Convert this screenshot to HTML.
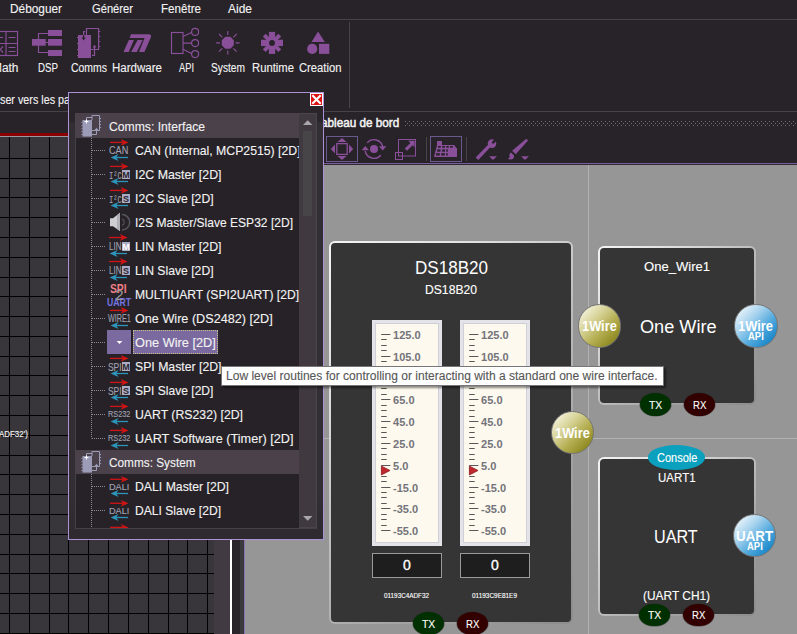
<!DOCTYPE html>
<html><head><meta charset="utf-8"><title>Flowcode</title>
<style>
html,body{margin:0;padding:0;background:#272329;}
#root{position:relative;width:797px;height:634px;overflow:hidden;background:#272329;font-family:"Liberation Sans",sans-serif;}
.b{position:absolute;display:block;}
.t{position:absolute;white-space:pre;font-family:"Liberation Sans",sans-serif;-webkit-text-stroke:0.12px currentColor;}
</style></head><body><div id="root">
<div class="t" style="left:10.00px;top:1.00px;font-size:12px;line-height:16px;color:#f2f2f2;transform:scaleX(0.9864);transform-origin:0 0;">Déboguer</div>
<div class="t" style="left:92.00px;top:1.00px;font-size:12px;line-height:16px;color:#f2f2f2;transform:scaleX(0.9312);transform-origin:0 0;">Générer</div>
<div class="t" style="left:161.00px;top:1.00px;font-size:12px;line-height:16px;color:#f2f2f2;transform:scaleX(0.9671);transform-origin:0 0;">Fenêtre</div>
<div class="t" style="left:228.00px;top:1.00px;font-size:12px;line-height:16px;color:#f2f2f2;transform:scaleX(0.9987);transform-origin:0 0;">Aide</div>
<div class="b" style="left:0px;top:19px;width:797px;height:1px;background:#464446;"></div>
<div class="t" style="left:-8.00px;top:60.00px;font-size:12px;line-height:16px;color:#f2f2f2;transform:scaleX(0.9930);transform-origin:0 0;">Math</div>
<div class="t" style="left:37.50px;top:60.00px;font-size:12px;line-height:16px;color:#f2f2f2;transform:scaleX(0.8101);transform-origin:0 0;">DSP</div>
<div class="t" style="left:71.00px;top:60.00px;font-size:12px;line-height:16px;color:#f2f2f2;transform:scaleX(0.8707);transform-origin:0 0;">Comms</div>
<div class="t" style="left:112.00px;top:60.00px;font-size:12px;line-height:16px;color:#f2f2f2;transform:scaleX(0.9610);transform-origin:0 0;">Hardware</div>
<div class="t" style="left:178.80px;top:60.00px;font-size:12px;line-height:16px;color:#f2f2f2;transform:scaleX(0.7754);transform-origin:0 0;">API</div>
<div class="t" style="left:210.60px;top:60.00px;font-size:12px;line-height:16px;color:#f2f2f2;transform:scaleX(0.8497);transform-origin:0 0;">System</div>
<div class="t" style="left:251.50px;top:60.00px;font-size:12px;line-height:16px;color:#f2f2f2;transform:scaleX(0.9399);transform-origin:0 0;">Runtime</div>
<div class="t" style="left:299.00px;top:60.00px;font-size:12px;line-height:16px;color:#f2f2f2;transform:scaleX(0.9370);transform-origin:0 0;">Creation</div>
<div class="b" style="left:349px;top:22px;width:1px;height:86px;background:#464446;"></div>
<div class="t" style="left:-0.50px;top:92.00px;font-size:12px;line-height:16px;color:#f2f2f2;transform:scaleX(0.8971);transform-origin:0 0;">ser vers les pa</div>
<div class="b" style="left:0px;top:111px;width:797px;height:1px;background:#464446;"></div>
<svg class="b" style="left:0;top:20px" width="360" height="50" viewBox="0 20 360 50">
<g fill="none" stroke="#8a4f99" stroke-width="1.15">
 <!-- math -->
 <rect x="-6.5" y="31.5" width="24" height="24"/><path d="M6 31.5V55.5M-6 43.5H17.5"/>
 <path d="M8.5 37.5H15.5M8.5 47.5H15.5M8.5 51.5H15.5M-3 37.5H3M-2.5 46.5L3 52.5M3 46.5L-2.5 52.5"/>
 <!-- dsp connectors -->
 <path d="M48 33.5H38.5V52.5H48M45 42.5H48"/>
 <!-- api -->
 <rect x="171.5" y="32.5" width="11.5" height="21"/>
 <circle cx="195.1" cy="31.9" r="3.5"/><circle cx="195.1" cy="43.1" r="3.5"/><circle cx="195.1" cy="54.1" r="3.5"/>
 <path d="M183 36.6L192 32.2M183 43.1H191.6M183 49.2L192 53.8"/>
 <!-- system rays -->
 <path d="M216.1 42.8H220M235.6 42.8H239.5M227.8 31V35M227.8 50.6V54.6M218.9 33.9L222.3 37.3M233.3 48.3L236.70000000000002 51.699999999999996M218.9 51.699999999999996L222.3 48.3M233.3 37.3L236.70000000000002 33.9"/>
</g>
<g fill="#8a4f99">
 <!-- dsp blocks -->
 <rect x="48" y="30" width="14" height="6"/><rect x="48" y="39" width="14" height="6.7"/><rect x="48" y="50" width="14" height="6"/><rect x="32" y="39" width="13.7" height="6.7"/>
 <!-- comms -->
 <rect x="78" y="35" width="13" height="23"/>
 <path d="M77 37h1v1h-1zM77 43h1v1h-1zM77 49h1v1h-1zM77 55h1v1h-1zM99 31h1.3v1h-1.3zM99 36h1.3v1h-1.3zM99 41h1.3v1h-1.3zM99 46h1.3v1h-1.3z"/>
 <path d="M92.6 47.6L94.5 44.8L96.4 47.6Z"/>
 <!-- hardware M -->
 <path d="M131 34.2H148.5Q152 34.2 150.8 37.5L144.4 52H139L144.6 38H129.6Z"/>
 <path d="M137.6 40.1H142.7L136.8 52H131.1Z"/><path d="M128.8 40.1H133.9L128.8 52H123.5Z"/>
 <!-- system disc -->
 <polygon points="233.81,45.29 230.29,48.81 225.31,48.81 221.79,45.29 221.79,40.31 225.31,36.79 230.29,36.79 233.81,40.31"/>
 <!-- creation -->
 <path d="M318.1 31.5L324.8 42H311.5Z"/><circle cx="312.2" cy="48.9" r="5.1"/><rect x="319" y="43.8" width="10.3" height="10.1"/>
</g>
<!-- comms outline -->
<g fill="none" stroke="#8a4f99" stroke-width="1.2">
 <path d="M86.5 35V28.5H98.6V49.5H91"/><path d="M85.2 31.6H83.6V35" /><path d="M92 55.4H94.5V46.5"/>
</g>
<path d="M83.6 35V39" stroke="#272329" stroke-width="1.2" fill="none"/><path d="M81.6 37.6L83.6 40.4L85.6 37.6Z" fill="#272329"/>
<!-- runtime gear -->
<g transform="translate(272 42.9)" fill="#8a4f99">
 <circle r="6.2"/>
 <rect x="-3.15" y="-11" width="6.3" height="22"/><rect x="-11" y="-3.15" width="22" height="6.3"/>
 <rect x="-2" y="-11" width="4" height="22" transform="rotate(45)"/><rect x="-2" y="-11" width="4" height="22" transform="rotate(135)"/>
 <circle r="2.9" fill="#272329"/>
</g>
</svg>
<div class="b" style="left:0px;top:133px;width:245px;height:3px;background:#8b0000;"></div>
<div class="b" style="left:0px;top:136px;width:245px;height:1px;background:#9a9a9a;"></div>
<div class="b" style="left:0px;top:137px;width:214px;height:497px;background:#38363b;"></div>
<svg class="b" style="left:0;top:0" width="214" height="634"><path d="M9.5 137V634M29.5 137V634M49.5 137V634M68.5 137V634M88.5 137V634M108.5 137V634M128.5 137V634M148.5 137V634M168.5 137V634M187.5 137V634M207.5 137V634M0 158.5H214M0 178.5H214M0 197.5H214M0 217.5H214M0 237.5H214M0 257.5H214M0 277.5H214M0 296.5H214M0 316.5H214M0 336.5H214M0 356.5H214M0 375.5H214M0 395.5H214M0 415.5H214M0 435.5H214M0 455.5H214M0 474.5H214M0 494.5H214M0 514.5H214M0 534.5H214M0 554.5H214M0 573.5H214M0 593.5H214M0 613.5H214M0 633.5H214" stroke="#000" stroke-width="1" fill="none"/></svg>
<div class="t" style="left:-0.80px;top:428.00px;font-size:8.6px;line-height:12px;color:#f6f6f6;transform:scaleX(0.9216);transform-origin:0 0;">ADF32')</div>
<div class="b" style="left:214px;top:137px;width:16.5px;height:497px;background:#413a42;"></div>
<div class="b" style="left:230.4px;top:137px;width:2.1px;height:497px;background:#ffffff;"></div>
<div class="b" style="left:233px;top:112px;width:7px;height:522px;background:#29252a;"></div>
<div class="b" style="left:240px;top:112px;width:4px;height:522px;background:#3a3a3c;"></div>
<div class="b" style="left:244px;top:112px;width:1px;height:522px;background:#8a6fb5;"></div>
<div class="t" style="left:320.60px;top:115.00px;font-size:12px;line-height:16px;color:#f2f2f2;transform:scaleX(0.9765);transform-origin:0 0;-webkit-text-stroke:0.5px currentColor;">ableau de bord</div>
<svg class="b" style="left:405px;top:121px" width="392" height="5"><path d="M0 0h1v1h-1zM2 2h1v1h-1zM0 4h1v1h-1zM4 0h1v1h-1zM6 2h1v1h-1zM4 4h1v1h-1zM8 0h1v1h-1zM10 2h1v1h-1zM8 4h1v1h-1zM12 0h1v1h-1zM14 2h1v1h-1zM12 4h1v1h-1zM16 0h1v1h-1zM18 2h1v1h-1zM16 4h1v1h-1zM20 0h1v1h-1zM22 2h1v1h-1zM20 4h1v1h-1zM24 0h1v1h-1zM26 2h1v1h-1zM24 4h1v1h-1zM28 0h1v1h-1zM30 2h1v1h-1zM28 4h1v1h-1zM32 0h1v1h-1zM34 2h1v1h-1zM32 4h1v1h-1zM36 0h1v1h-1zM38 2h1v1h-1zM36 4h1v1h-1zM40 0h1v1h-1zM42 2h1v1h-1zM40 4h1v1h-1zM44 0h1v1h-1zM46 2h1v1h-1zM44 4h1v1h-1zM48 0h1v1h-1zM50 2h1v1h-1zM48 4h1v1h-1zM52 0h1v1h-1zM54 2h1v1h-1zM52 4h1v1h-1zM56 0h1v1h-1zM58 2h1v1h-1zM56 4h1v1h-1zM60 0h1v1h-1zM62 2h1v1h-1zM60 4h1v1h-1zM64 0h1v1h-1zM66 2h1v1h-1zM64 4h1v1h-1zM68 0h1v1h-1zM70 2h1v1h-1zM68 4h1v1h-1zM72 0h1v1h-1zM74 2h1v1h-1zM72 4h1v1h-1zM76 0h1v1h-1zM78 2h1v1h-1zM76 4h1v1h-1zM80 0h1v1h-1zM82 2h1v1h-1zM80 4h1v1h-1zM84 0h1v1h-1zM86 2h1v1h-1zM84 4h1v1h-1zM88 0h1v1h-1zM90 2h1v1h-1zM88 4h1v1h-1zM92 0h1v1h-1zM94 2h1v1h-1zM92 4h1v1h-1zM96 0h1v1h-1zM98 2h1v1h-1zM96 4h1v1h-1zM100 0h1v1h-1zM102 2h1v1h-1zM100 4h1v1h-1zM104 0h1v1h-1zM106 2h1v1h-1zM104 4h1v1h-1zM108 0h1v1h-1zM110 2h1v1h-1zM108 4h1v1h-1zM112 0h1v1h-1zM114 2h1v1h-1zM112 4h1v1h-1zM116 0h1v1h-1zM118 2h1v1h-1zM116 4h1v1h-1zM120 0h1v1h-1zM122 2h1v1h-1zM120 4h1v1h-1zM124 0h1v1h-1zM126 2h1v1h-1zM124 4h1v1h-1zM128 0h1v1h-1zM130 2h1v1h-1zM128 4h1v1h-1zM132 0h1v1h-1zM134 2h1v1h-1zM132 4h1v1h-1zM136 0h1v1h-1zM138 2h1v1h-1zM136 4h1v1h-1zM140 0h1v1h-1zM142 2h1v1h-1zM140 4h1v1h-1zM144 0h1v1h-1zM146 2h1v1h-1zM144 4h1v1h-1zM148 0h1v1h-1zM150 2h1v1h-1zM148 4h1v1h-1zM152 0h1v1h-1zM154 2h1v1h-1zM152 4h1v1h-1zM156 0h1v1h-1zM158 2h1v1h-1zM156 4h1v1h-1zM160 0h1v1h-1zM162 2h1v1h-1zM160 4h1v1h-1zM164 0h1v1h-1zM166 2h1v1h-1zM164 4h1v1h-1zM168 0h1v1h-1zM170 2h1v1h-1zM168 4h1v1h-1zM172 0h1v1h-1zM174 2h1v1h-1zM172 4h1v1h-1zM176 0h1v1h-1zM178 2h1v1h-1zM176 4h1v1h-1zM180 0h1v1h-1zM182 2h1v1h-1zM180 4h1v1h-1zM184 0h1v1h-1zM186 2h1v1h-1zM184 4h1v1h-1zM188 0h1v1h-1zM190 2h1v1h-1zM188 4h1v1h-1zM192 0h1v1h-1zM194 2h1v1h-1zM192 4h1v1h-1zM196 0h1v1h-1zM198 2h1v1h-1zM196 4h1v1h-1zM200 0h1v1h-1zM202 2h1v1h-1zM200 4h1v1h-1zM204 0h1v1h-1zM206 2h1v1h-1zM204 4h1v1h-1zM208 0h1v1h-1zM210 2h1v1h-1zM208 4h1v1h-1zM212 0h1v1h-1zM214 2h1v1h-1zM212 4h1v1h-1zM216 0h1v1h-1zM218 2h1v1h-1zM216 4h1v1h-1zM220 0h1v1h-1zM222 2h1v1h-1zM220 4h1v1h-1zM224 0h1v1h-1zM226 2h1v1h-1zM224 4h1v1h-1zM228 0h1v1h-1zM230 2h1v1h-1zM228 4h1v1h-1zM232 0h1v1h-1zM234 2h1v1h-1zM232 4h1v1h-1zM236 0h1v1h-1zM238 2h1v1h-1zM236 4h1v1h-1zM240 0h1v1h-1zM242 2h1v1h-1zM240 4h1v1h-1zM244 0h1v1h-1zM246 2h1v1h-1zM244 4h1v1h-1zM248 0h1v1h-1zM250 2h1v1h-1zM248 4h1v1h-1zM252 0h1v1h-1zM254 2h1v1h-1zM252 4h1v1h-1zM256 0h1v1h-1zM258 2h1v1h-1zM256 4h1v1h-1zM260 0h1v1h-1zM262 2h1v1h-1zM260 4h1v1h-1zM264 0h1v1h-1zM266 2h1v1h-1zM264 4h1v1h-1zM268 0h1v1h-1zM270 2h1v1h-1zM268 4h1v1h-1zM272 0h1v1h-1zM274 2h1v1h-1zM272 4h1v1h-1zM276 0h1v1h-1zM278 2h1v1h-1zM276 4h1v1h-1zM280 0h1v1h-1zM282 2h1v1h-1zM280 4h1v1h-1zM284 0h1v1h-1zM286 2h1v1h-1zM284 4h1v1h-1zM288 0h1v1h-1zM290 2h1v1h-1zM288 4h1v1h-1zM292 0h1v1h-1zM294 2h1v1h-1zM292 4h1v1h-1zM296 0h1v1h-1zM298 2h1v1h-1zM296 4h1v1h-1zM300 0h1v1h-1zM302 2h1v1h-1zM300 4h1v1h-1zM304 0h1v1h-1zM306 2h1v1h-1zM304 4h1v1h-1zM308 0h1v1h-1zM310 2h1v1h-1zM308 4h1v1h-1zM312 0h1v1h-1zM314 2h1v1h-1zM312 4h1v1h-1zM316 0h1v1h-1zM318 2h1v1h-1zM316 4h1v1h-1zM320 0h1v1h-1zM322 2h1v1h-1zM320 4h1v1h-1zM324 0h1v1h-1zM326 2h1v1h-1zM324 4h1v1h-1zM328 0h1v1h-1zM330 2h1v1h-1zM328 4h1v1h-1zM332 0h1v1h-1zM334 2h1v1h-1zM332 4h1v1h-1zM336 0h1v1h-1zM338 2h1v1h-1zM336 4h1v1h-1zM340 0h1v1h-1zM342 2h1v1h-1zM340 4h1v1h-1zM344 0h1v1h-1zM346 2h1v1h-1zM344 4h1v1h-1zM348 0h1v1h-1zM350 2h1v1h-1zM348 4h1v1h-1zM352 0h1v1h-1zM354 2h1v1h-1zM352 4h1v1h-1zM356 0h1v1h-1zM358 2h1v1h-1zM356 4h1v1h-1zM360 0h1v1h-1zM362 2h1v1h-1zM360 4h1v1h-1zM364 0h1v1h-1zM366 2h1v1h-1zM364 4h1v1h-1zM368 0h1v1h-1zM370 2h1v1h-1zM368 4h1v1h-1zM372 0h1v1h-1zM374 2h1v1h-1zM372 4h1v1h-1zM376 0h1v1h-1zM378 2h1v1h-1zM376 4h1v1h-1zM380 0h1v1h-1zM382 2h1v1h-1zM380 4h1v1h-1zM384 0h1v1h-1zM386 2h1v1h-1zM384 4h1v1h-1zM388 0h1v1h-1zM390 2h1v1h-1zM388 4h1v1h-1z" fill="#706e70"/></svg>
<div class="b" style="left:245px;top:163px;width:552px;height:1px;background:#7a5c9e;"></div>
<div class="b" style="left:245px;top:164px;width:552px;height:1px;background:#2e2a30;"></div>
<div class="b" style="left:245px;top:165px;width:552px;height:469px;background:#969696;"></div>
<div class="b" style="left:588px;top:165px;width:1px;height:469px;background:#b2b2b2;"></div>
<div class="b" style="left:245px;top:438px;width:552px;height:1px;background:#b2b2b2;"></div>
<div class="b" style="left:326px;top:136px;width:32px;height:26px;background:transparent;border:1px solid #6b588c;box-sizing:border-box;"></div>
<div class="b" style="left:430px;top:136px;width:32px;height:26px;background:transparent;border:1px solid #6b588c;box-sizing:border-box;"></div>
<div class="b" style="left:426px;top:137px;width:1px;height:24px;background:#464446;"></div>
<div class="b" style="left:466px;top:137px;width:1px;height:24px;background:#464446;"></div>
<svg class="b" style="left:320px;top:130px" width="220" height="36" viewBox="320 130 220 36">
<g fill="#8a4f99">
 <!-- move -->
 <path d="M342 138L346.6 142H337.4ZM342 160L346.6 156H337.4ZM330.8 149L335 144.4V153.6ZM353.2 149L349 144.4V153.6Z"/>
 <!-- rotate -->
 <circle cx="374" cy="149" r="4"/>
 <path d="M379 146.3H386.4L382.7 150.6ZM361.6 150.3H369L365.3 146Z"/>
 <!-- arrow NE -->
 <path d="M408.2 140.8H414.6V147.2L412.6 145.2L407 150.8L404.8 148.6L410.4 143Z"/>
 <!-- table -->
 <path d="M437 141H442V145.1H454.3L456.2 148H457V157H434L437 145.1Z"/>
 <!-- wrench -->
 <path d="M475.7 157.6L488.8 144L491.2 146.3L478.3 160Z"/>
 <circle cx="492" cy="143.6" r="4.3"/>
 <path d="M489 156.2H497L493 159.9Z"/>
 <!-- brush -->
 <path d="M526.3 138.7L528 140.4L515.7 154.3L512.1 150.8Z"/>
 <path d="M510.9 152.4L514 155.5Q514.6 159.6 510 159.5Q508.6 159.5 508 158.8Q510.4 157.3 509.3 155.2Q509.5 153.2 510.9 152.4Z"/>
 <path d="M521 156.2H529L525 159.9Z"/>
</g>
<path d="M492.4 143.2L497 138.6" stroke="#272329" stroke-width="2.6"/>
<g fill="#272329">
 <rect x="438" y="146" width="2.7" height="1.7"/><rect x="442.2" y="146" width="2.7" height="1.7"/><rect x="446.2" y="146" width="2.6" height="1.7"/><rect x="450.1" y="146" width="2.7" height="1.7"/>
 <rect x="437.2" y="149.4" width="3.3" height="2.3"/><rect x="442.2" y="149.4" width="2.7" height="2.3"/><rect x="446.2" y="149.4" width="1.6" height="2.3"/>
 <rect x="436.1" y="153.2" width="3.7" height="2.3"/><rect x="441.2" y="153.2" width="3.7" height="2.3"/><rect x="446.2" y="153.2" width="1.6" height="2.3"/>
</g>
<g fill="none" stroke="#8a4f99" stroke-width="1">
 <rect x="336.8" y="143.6" width="10.4" height="10.8" stroke-width="1.3"/>
 <path d="M367.2 142.8A9 9 0 0 1 382.8 147M380.8 155.2A9 9 0 0 1 365.2 151" stroke-width="1.4"/>
 <rect x="398.5" y="139.5" width="17" height="16.5"/><rect x="395.5" y="152.5" width="7" height="7"/>
</g>
</svg>
<div class="b" style="left:329px;top:241px;width:244px;height:383px;border-radius:6px;background:linear-gradient(135deg,#f4f4f4 0%,#dedede 25%,#bcbcbc 50%,#a0a0a0 75%,#8c8c8c 100%);"><div style="position:absolute;left:2px;top:2px;right:2px;bottom:2px;border-radius:4px;background:#353535"></div></div>
<div class="b" style="left:598px;top:246px;width:158.2px;height:158.5px;border-radius:6px;background:linear-gradient(135deg,#f4f4f4 0%,#dedede 25%,#bcbcbc 50%,#a0a0a0 75%,#8c8c8c 100%);"><div style="position:absolute;left:2px;top:2px;right:2px;bottom:2px;border-radius:4px;background:#353535"></div></div>
<div class="b" style="left:597.5px;top:457px;width:158.2px;height:158.6px;border-radius:6px;background:linear-gradient(135deg,#f4f4f4 0%,#dedede 25%,#bcbcbc 50%,#a0a0a0 75%,#8c8c8c 100%);"><div style="position:absolute;left:2px;top:2px;right:2px;bottom:2px;border-radius:4px;background:#353535"></div></div>
<div class="t" style="left:415.00px;top:257.00px;font-size:18px;line-height:22px;color:#fff;transform:scaleX(0.9473);transform-origin:0 0;-webkit-text-stroke:0;">DS18B20</div>
<div class="t" style="left:425.00px;top:282.00px;font-size:12px;line-height:16px;color:#fff;transform:scaleX(1.0122);transform-origin:0 0;">DS18B20</div>
<div class="b" style="left:372px;top:320px;width:70px;height:226px;background:#e3e3e9;"><div style="position:absolute;left:3px;top:3px;right:3px;bottom:3px;box-sizing:border-box;background:#fdf9ee;border:1px solid #cfcfd6"></div></div>
<svg class="b" style="left:0;top:0" width="797" height="634"><path d="M381.2 334.50H390.4M381.2 339.50H386.7M381.2 345.50H386.7M381.2 350.50H386.7M381.2 356.50H390.4M381.2 361.50H386.7M381.2 367.50H386.7M381.2 372.50H386.7M381.2 377.50H390.4M381.2 383.50H386.7M381.2 388.50H386.7M381.2 394.50H386.7M381.2 399.50H390.4M381.2 405.50H386.7M381.2 410.50H386.7M381.2 416.50H386.7M381.2 421.50H390.4M381.2 427.50H386.7M381.2 432.50H386.7M381.2 437.50H386.7M381.2 443.50H390.4M381.2 448.50H386.7M381.2 454.50H386.7M381.2 459.50H386.7M381.2 465.50H390.4M381.2 470.50H386.7M381.2 476.50H386.7M381.2 481.50H386.7M381.2 487.50H390.4M381.2 492.50H386.7M381.2 497.50H386.7M381.2 503.50H386.7M381.2 508.50H390.4M381.2 514.50H386.7M381.2 519.50H386.7M381.2 525.50H386.7M381.2 530.50H390.4" stroke="#585858" stroke-width="1" fill="none"/><path d="M381.4 466.1L390 470.5L381.4 474.9Z" fill="#c0272d" stroke="#8e1a1f" stroke-width="0.8"/></svg>
<div class="t" style="left:393.10px;top:328.00px;font-size:11px;line-height:14px;color:#73737a;-webkit-text-stroke:0;font-weight:bold;">125.0</div>
<div class="t" style="left:393.10px;top:350.00px;font-size:11px;line-height:14px;color:#73737a;-webkit-text-stroke:0;font-weight:bold;">105.0</div>
<div class="t" style="left:393.10px;top:371.00px;font-size:11px;line-height:14px;color:#73737a;-webkit-text-stroke:0;font-weight:bold;">85.0</div>
<div class="t" style="left:393.10px;top:393.00px;font-size:11px;line-height:14px;color:#73737a;-webkit-text-stroke:0;font-weight:bold;">65.0</div>
<div class="t" style="left:393.10px;top:415.00px;font-size:11px;line-height:14px;color:#73737a;-webkit-text-stroke:0;font-weight:bold;">45.0</div>
<div class="t" style="left:393.10px;top:437.00px;font-size:11px;line-height:14px;color:#73737a;-webkit-text-stroke:0;font-weight:bold;">25.0</div>
<div class="t" style="left:393.10px;top:459.00px;font-size:11px;line-height:14px;color:#73737a;-webkit-text-stroke:0;font-weight:bold;">5.0</div>
<div class="t" style="left:393.10px;top:481.00px;font-size:11px;line-height:14px;color:#73737a;-webkit-text-stroke:0;font-weight:bold;">-15.0</div>
<div class="t" style="left:393.10px;top:502.00px;font-size:11px;line-height:14px;color:#73737a;-webkit-text-stroke:0;font-weight:bold;">-35.0</div>
<div class="t" style="left:393.10px;top:524.00px;font-size:11px;line-height:14px;color:#73737a;-webkit-text-stroke:0;font-weight:bold;">-55.0</div>
<div class="b" style="left:460px;top:320px;width:70px;height:226px;background:#e3e3e9;"><div style="position:absolute;left:3px;top:3px;right:3px;bottom:3px;box-sizing:border-box;background:#fdf9ee;border:1px solid #cfcfd6"></div></div>
<svg class="b" style="left:0;top:0" width="797" height="634"><path d="M469.2 334.50H478.4M469.2 339.50H474.7M469.2 345.50H474.7M469.2 350.50H474.7M469.2 356.50H478.4M469.2 361.50H474.7M469.2 367.50H474.7M469.2 372.50H474.7M469.2 377.50H478.4M469.2 383.50H474.7M469.2 388.50H474.7M469.2 394.50H474.7M469.2 399.50H478.4M469.2 405.50H474.7M469.2 410.50H474.7M469.2 416.50H474.7M469.2 421.50H478.4M469.2 427.50H474.7M469.2 432.50H474.7M469.2 437.50H474.7M469.2 443.50H478.4M469.2 448.50H474.7M469.2 454.50H474.7M469.2 459.50H474.7M469.2 465.50H478.4M469.2 470.50H474.7M469.2 476.50H474.7M469.2 481.50H474.7M469.2 487.50H478.4M469.2 492.50H474.7M469.2 497.50H474.7M469.2 503.50H474.7M469.2 508.50H478.4M469.2 514.50H474.7M469.2 519.50H474.7M469.2 525.50H474.7M469.2 530.50H478.4" stroke="#585858" stroke-width="1" fill="none"/><path d="M469.4 466.1L478 470.5L469.4 474.9Z" fill="#c0272d" stroke="#8e1a1f" stroke-width="0.8"/></svg>
<div class="t" style="left:481.10px;top:328.00px;font-size:11px;line-height:14px;color:#73737a;-webkit-text-stroke:0;font-weight:bold;">125.0</div>
<div class="t" style="left:481.10px;top:350.00px;font-size:11px;line-height:14px;color:#73737a;-webkit-text-stroke:0;font-weight:bold;">105.0</div>
<div class="t" style="left:481.10px;top:371.00px;font-size:11px;line-height:14px;color:#73737a;-webkit-text-stroke:0;font-weight:bold;">85.0</div>
<div class="t" style="left:481.10px;top:393.00px;font-size:11px;line-height:14px;color:#73737a;-webkit-text-stroke:0;font-weight:bold;">65.0</div>
<div class="t" style="left:481.10px;top:415.00px;font-size:11px;line-height:14px;color:#73737a;-webkit-text-stroke:0;font-weight:bold;">45.0</div>
<div class="t" style="left:481.10px;top:437.00px;font-size:11px;line-height:14px;color:#73737a;-webkit-text-stroke:0;font-weight:bold;">25.0</div>
<div class="t" style="left:481.10px;top:459.00px;font-size:11px;line-height:14px;color:#73737a;-webkit-text-stroke:0;font-weight:bold;">5.0</div>
<div class="t" style="left:481.10px;top:481.00px;font-size:11px;line-height:14px;color:#73737a;-webkit-text-stroke:0;font-weight:bold;">-15.0</div>
<div class="t" style="left:481.10px;top:502.00px;font-size:11px;line-height:14px;color:#73737a;-webkit-text-stroke:0;font-weight:bold;">-35.0</div>
<div class="t" style="left:481.10px;top:524.00px;font-size:11px;line-height:14px;color:#73737a;-webkit-text-stroke:0;font-weight:bold;">-55.0</div>
<div class="b" style="left:372px;top:553px;width:70px;height:25px;background:#1e1e1e;box-sizing:border-box;border:1px solid #9a9a9a;"></div>
<div class="t" style="left:403.10px;top:556.00px;font-size:14px;line-height:18px;color:#fff;-webkit-text-stroke:0.35px #fff;">0</div>
<div class="t" style="left:384.00px;top:591.00px;font-size:7px;line-height:9px;color:#fff;transform:scaleX(0.9057);transform-origin:0 0;">01193C4ADF32</div>
<div class="b" style="left:460px;top:553px;width:70px;height:25px;background:#1e1e1e;box-sizing:border-box;border:1px solid #9a9a9a;"></div>
<div class="t" style="left:491.10px;top:556.00px;font-size:14px;line-height:18px;color:#fff;-webkit-text-stroke:0.35px #fff;">0</div>
<div class="t" style="left:472.00px;top:591.00px;font-size:7px;line-height:9px;color:#fff;transform:scaleX(0.9198);transform-origin:0 0;">01193C9E81E9</div>
<div class="b" style="left:413.0px;top:612.1px;width:31.0px;height:23.0px;border-radius:50%;background:#003000;box-shadow:0 0 0 0.6px rgba(40,40,40,0.55)"></div>
<div class="t" style="left:421.85px;top:617.00px;font-size:11.6px;line-height:14px;color:#fff;transform:scaleX(0.8969);transform-origin:0 0;">TX</div>
<div class="b" style="left:457.3px;top:612.0px;width:31.0px;height:23.0px;border-radius:50%;background:#330000;box-shadow:0 0 0 0.6px rgba(40,40,40,0.55)"></div>
<div class="t" style="left:466.15px;top:617.00px;font-size:11.6px;line-height:14px;color:#fff;transform:scaleX(0.8256);transform-origin:0 0;">RX</div>
<div class="b" style="left:640.1px;top:393.3px;width:31.0px;height:23.0px;border-radius:50%;background:#003000;box-shadow:0 0 0 0.6px rgba(40,40,40,0.55)"></div>
<div class="t" style="left:648.95px;top:398.00px;font-size:11.6px;line-height:14px;color:#fff;transform:scaleX(0.8969);transform-origin:0 0;">TX</div>
<div class="b" style="left:684.0px;top:393.3px;width:31.0px;height:23.0px;border-radius:50%;background:#330000;box-shadow:0 0 0 0.6px rgba(40,40,40,0.55)"></div>
<div class="t" style="left:692.85px;top:398.00px;font-size:11.6px;line-height:14px;color:#fff;transform:scaleX(0.8256);transform-origin:0 0;">RX</div>
<div class="b" style="left:639.3000000000001px;top:603.6px;width:30.6px;height:22.6px;border-radius:50%;background:#003000;box-shadow:0 0 0 0.6px rgba(40,40,40,0.55)"></div>
<div class="t" style="left:647.95px;top:608.00px;font-size:11.6px;line-height:14px;color:#fff;transform:scaleX(0.8969);transform-origin:0 0;">TX</div>
<div class="b" style="left:683.4000000000001px;top:603.6px;width:30.6px;height:22.6px;border-radius:50%;background:#330000;box-shadow:0 0 0 0.6px rgba(40,40,40,0.55)"></div>
<div class="t" style="left:692.05px;top:608.00px;font-size:11.6px;line-height:14px;color:#fff;transform:scaleX(0.8256);transform-origin:0 0;">RX</div>
<div class="t" style="left:644.25px;top:259.00px;font-size:12.5px;line-height:16px;color:#fff;transform:scaleX(1.0453);transform-origin:0 0;">One_Wire1</div>
<div class="t" style="left:639.65px;top:315.50px;font-size:18px;line-height:22px;color:#fff;transform:scaleX(1.0088);transform-origin:0 0;-webkit-text-stroke:0;">One Wire</div>
<div class="b" style="left:647.8px;top:445.2px;width:57.3px;height:24.7px;border-radius:50%;background:#0aa0be"></div>
<div class="t" style="left:656.60px;top:450.00px;font-size:12px;line-height:16px;color:#fff;transform:scaleX(0.9175);transform-origin:0 0;">Console</div>
<div class="t" style="left:657.60px;top:470.00px;font-size:12.5px;line-height:16px;color:#fff;transform:scaleX(0.9223);transform-origin:0 0;">UART1</div>
<div class="t" style="left:654.35px;top:526.00px;font-size:18px;line-height:22px;color:#fff;transform:scaleX(0.8976);transform-origin:0 0;-webkit-text-stroke:0;">UART</div>
<div class="t" style="left:642.95px;top:587.00px;font-size:12.8px;line-height:17px;color:#fff;transform:scaleX(0.9311);transform-origin:0 0;">(UART CH1)</div>
<div class="b" style="left:577.5999999999999px;top:304.3px;width:43.4px;height:43.4px;border-radius:50%;background:linear-gradient(135deg,#f0eed2 14%,#d6d296 36%,#b4ae52 60%,#8f8920 86%);box-sizing:border-box;border:1.6px solid #757575"></div>
<div class="t" style="left:581.90px;top:316.00px;font-size:15.3px;line-height:19px;color:#fff;transform:scaleX(0.8379);transform-origin:0 0;-webkit-text-stroke:0;font-weight:bold;">1Wire</div>
<div class="b" style="left:551.0px;top:410.90000000000003px;width:43.4px;height:43.4px;border-radius:50%;background:linear-gradient(135deg,#f0eed2 14%,#d6d296 36%,#b4ae52 60%,#8f8920 86%);box-sizing:border-box;border:1.6px solid #757575"></div>
<div class="t" style="left:555.30px;top:423.00px;font-size:15.3px;line-height:19px;color:#fff;transform:scaleX(0.8379);transform-origin:0 0;-webkit-text-stroke:0;font-weight:bold;">1Wire</div>
<div class="b" style="left:734.1999999999999px;top:304.2px;width:43.4px;height:43.4px;border-radius:50%;background:linear-gradient(135deg,#e0f0f9 14%,#a6d2ee 36%,#55abde 60%,#1b88ca 86%);box-sizing:border-box;border:1.6px solid #757575"></div>
<div class="t" style="left:738.45px;top:316.00px;font-size:15.3px;line-height:19px;color:#fff;transform:scaleX(0.8403);transform-origin:0 0;-webkit-text-stroke:0;font-weight:bold;">1Wire</div>
<div class="t" style="left:748.00px;top:330.00px;font-size:10px;line-height:13px;color:#fff;transform:scaleX(0.9477);transform-origin:0 0;-webkit-text-stroke:0;font-weight:bold;">API</div>
<div class="b" style="left:733.0999999999999px;top:514.0px;width:43.4px;height:43.4px;border-radius:50%;background:linear-gradient(135deg,#e0f0f9 14%,#a6d2ee 36%,#55abde 60%,#1b88ca 86%);box-sizing:border-box;border:1.6px solid #757575"></div>
<div class="t" style="left:736.20px;top:526.00px;font-size:15.3px;line-height:19px;color:#fff;transform:scaleX(0.8753);transform-origin:0 0;-webkit-text-stroke:0;font-weight:bold;">UART</div>
<div class="t" style="left:746.90px;top:540.00px;font-size:10px;line-height:13px;color:#fff;transform:scaleX(0.9477);transform-origin:0 0;-webkit-text-stroke:0;font-weight:bold;">API</div>
<div class="b" style="left:68px;top:92px;width:256px;height:448px;box-sizing:border-box;border:1px solid #ab92d6;background:linear-gradient(180deg,#2a252b 0,#2a252b 28px,#332d34 30px,#332d34 400px,#2f2930 436px,#2f2930 100%)"></div>
<div class="b" style="left:310px;top:93px;width:13px;height:13px;background:#fff"></div><svg class="b" style="left:311px;top:94px" width="11" height="11"><rect width="11" height="11" fill="#dc1212"/><path d="M1.3 1.3L9.7 9.7M9.7 1.3L1.3 9.7" stroke="#fff" stroke-width="2.1"/></svg>
<div class="b" style="left:75px;top:113px;width:242px;height:416px;background:#262228;box-sizing:border-box;border:1px solid #453f47;border-top-color:#262228;border-right:none;"></div>
<div class="b" style="left:75px;top:113px;width:224px;height:25px;background:#4a414b;"></div>
<div class="b" style="left:75px;top:450px;width:224px;height:24px;background:#4a414b;"></div>
<svg class="b" style="left:75px;top:113px" width="224" height="415"><g stroke="#8a888c" stroke-width="1" stroke-dasharray="1 1" fill="none"><path d="M16.5 25V325.5"/><path d="M16.5 361V415"/><path d="M17 37.5H31"/><path d="M17 61.5H31"/><path d="M17 85.5H31"/><path d="M17 109.5H31"/><path d="M17 133.5H31"/><path d="M17 157.5H31"/><path d="M17 181.5H31"/><path d="M17 205.5H31"/><path d="M17 229.5H31"/><path d="M17 253.5H31"/><path d="M17 277.5H31"/><path d="M17 301.5H31"/><path d="M17 325.5H31"/><path d="M17 373.5H31"/><path d="M17 397.5H31"/></g></svg>
<div class="t" style="left:108.60px;top:118.00px;font-size:13px;line-height:17px;color:#f2f2f2;transform:scaleX(0.9357);transform-origin:0 0;">Comms: Interface</div>
<div class="t" style="left:109.00px;top:143.00px;font-size:11.6px;line-height:14px;color:#a2a2b2;transform:scaleX(0.7883);transform-origin:0 0;">CAN</div>
<div class="t" style="left:135.00px;top:142.00px;font-size:13px;line-height:17px;color:#f2f2f2;transform:scaleX(0.9432);transform-origin:0 0;">CAN (Internal, MCP2515) [2D]</div>
<div class="t" style="left:108.60px;top:167.50px;font-size:11.5px;line-height:15px;color:#a2a2b2;transform:scaleX(0.6178);transform-origin:0 0;font-family:'Liberation Mono',monospace;">I²C</div>
<div class="b" style="left:122px;top:170px;width:8px;height:9px;background:#acacc4;"></div>
<div class="t" style="left:122.25px;top:169.00px;font-size:9px;line-height:12px;color:#2a2630;-webkit-text-stroke:0;font-weight:bold;">M</div>
<div class="t" style="left:135.00px;top:166.00px;font-size:13px;line-height:17px;color:#f2f2f2;transform:scaleX(0.9502);transform-origin:0 0;">I2C Master [2D]</div>
<div class="t" style="left:108.60px;top:191.50px;font-size:11.5px;line-height:15px;color:#a2a2b2;transform:scaleX(0.6178);transform-origin:0 0;font-family:'Liberation Mono',monospace;">I²C</div>
<div class="b" style="left:122px;top:194px;width:8px;height:9px;background:#acacc4;"></div>
<div class="t" style="left:122.99px;top:193.00px;font-size:9px;line-height:12px;color:#2a2630;-webkit-text-stroke:0;font-weight:bold;">S</div>
<div class="t" style="left:135.00px;top:190.00px;font-size:13px;line-height:17px;color:#f2f2f2;transform:scaleX(0.9376);transform-origin:0 0;">I2C Slave [2D]</div>
<div class="t" style="left:135.00px;top:214.00px;font-size:13px;line-height:17px;color:#f2f2f2;transform:scaleX(0.9265);transform-origin:0 0;">I2S Master/Slave ESP32 [2D]</div>
<div class="t" style="left:108.90px;top:239.00px;font-size:10.5px;line-height:14px;color:#a2a2b2;transform:scaleX(0.7587);transform-origin:0 0;">LIN</div>
<div class="b" style="left:122px;top:242px;width:8px;height:9px;background:#acacc4;"></div>
<div class="t" style="left:122.25px;top:241.00px;font-size:9px;line-height:12px;color:#ffffff;-webkit-text-stroke:0;font-weight:bold;">M</div>
<div class="t" style="left:135.00px;top:238.00px;font-size:13px;line-height:17px;color:#f2f2f2;transform:scaleX(0.9502);transform-origin:0 0;">LIN Master [2D]</div>
<div class="t" style="left:108.90px;top:263.00px;font-size:10.5px;line-height:14px;color:#a2a2b2;transform:scaleX(0.7587);transform-origin:0 0;">LIN</div>
<div class="b" style="left:122px;top:266px;width:8px;height:9px;background:#acacc4;"></div>
<div class="t" style="left:122.99px;top:265.00px;font-size:9px;line-height:12px;color:#2a2630;-webkit-text-stroke:0;font-weight:bold;">S</div>
<div class="t" style="left:135.00px;top:262.00px;font-size:13px;line-height:17px;color:#f2f2f2;transform:scaleX(0.9376);transform-origin:0 0;">LIN Slave [2D]</div>
<div class="t" style="left:109.80px;top:280.50px;font-size:12.6px;line-height:16px;color:#ee7f86;transform:scaleX(0.8123);transform-origin:0 0;-webkit-text-stroke:0;font-weight:bold;">SPI</div>
<div class="t" style="left:107.00px;top:294.50px;font-size:11px;line-height:14px;color:#7674e4;transform:scaleX(0.7853);transform-origin:0 0;-webkit-text-stroke:0;font-weight:bold;">UART</div>
<div class="t" style="left:115.30px;top:284.50px;font-size:15px;line-height:19px;color:#9c9a9c;">2</div>
<div class="t" style="left:135.00px;top:286.00px;font-size:13px;line-height:17px;color:#f2f2f2;transform:scaleX(0.9317);transform-origin:0 0;">MULTIUART (SPI2UART) [2D]</div>
<div class="t" style="left:107.60px;top:311.00px;font-size:11.6px;line-height:14px;color:#a2a2b2;transform:scaleX(0.6209);transform-origin:0 0;">WIRE1</div>
<div class="t" style="left:135.00px;top:310.00px;font-size:13px;line-height:17px;color:#f2f2f2;transform:scaleX(0.9724);transform-origin:0 0;">One Wire (DS2482) [2D]</div>
<div class="b" style="left:107px;top:330px;width:24px;height:24px;background:#7b6a9f;"></div>
<div class="b" style="left:133px;top:330px;width:85px;height:24px;background:#7b6a9f;box-sizing:border-box;border:1px dotted #c9c58a;"></div>
<div class="t" style="left:135.00px;top:334.00px;font-size:13px;line-height:17px;color:#f2f2f2;transform:scaleX(0.9811);transform-origin:0 0;">One Wire [2D]</div>
<div class="t" style="left:107.80px;top:360.00px;font-size:11.2px;line-height:14px;color:#a2a2b2;transform:scaleX(0.7536);transform-origin:0 0;">SPI</div>
<div class="b" style="left:122px;top:362px;width:8px;height:9px;background:#acacc4;"></div>
<div class="t" style="left:122.25px;top:361.00px;font-size:9px;line-height:12px;color:#2a2630;-webkit-text-stroke:0;font-weight:bold;">M</div>
<div class="t" style="left:135.00px;top:358.00px;font-size:13px;line-height:17px;color:#f2f2f2;transform:scaleX(0.9428);transform-origin:0 0;">SPI Master [2D]</div>
<div class="t" style="left:107.80px;top:384.00px;font-size:11.2px;line-height:14px;color:#a2a2b2;transform:scaleX(0.7536);transform-origin:0 0;">SPI</div>
<div class="b" style="left:122px;top:386px;width:8px;height:9px;background:#acacc4;"></div>
<div class="t" style="left:122.99px;top:385.00px;font-size:9px;line-height:12px;color:#2a2630;-webkit-text-stroke:0;font-weight:bold;">S</div>
<div class="t" style="left:135.00px;top:382.00px;font-size:13px;line-height:17px;color:#f2f2f2;transform:scaleX(0.9273);transform-origin:0 0;">SPI Slave [2D]</div>
<div class="t" style="left:107.80px;top:408.00px;font-size:9.2px;line-height:12px;color:#a2a2b2;transform:scaleX(0.7973);transform-origin:0 0;">RS232</div>
<div class="t" style="left:135.00px;top:406.00px;font-size:13px;line-height:17px;color:#f2f2f2;transform:scaleX(0.9440);transform-origin:0 0;">UART (RS232) [2D]</div>
<div class="t" style="left:107.80px;top:432.00px;font-size:9.2px;line-height:12px;color:#a2a2b2;transform:scaleX(0.7973);transform-origin:0 0;">RS232</div>
<div class="t" style="left:135.00px;top:430.00px;font-size:13px;line-height:17px;color:#f2f2f2;transform:scaleX(0.9766);transform-origin:0 0;">UART Software (Timer) [2D]</div>
<div class="t" style="left:108.60px;top:454.00px;font-size:13px;line-height:17px;color:#f2f2f2;transform:scaleX(0.9083);transform-origin:0 0;">Comms: System</div>
<div class="t" style="left:108.60px;top:480.00px;font-size:9.7px;line-height:13px;color:#a2a2b2;transform:scaleX(0.9468);transform-origin:0 0;">DALI</div>
<div class="t" style="left:135.00px;top:478.00px;font-size:13px;line-height:17px;color:#f2f2f2;transform:scaleX(0.9428);transform-origin:0 0;">DALI Master [2D]</div>
<div class="t" style="left:108.60px;top:504.00px;font-size:9.7px;line-height:13px;color:#a2a2b2;transform:scaleX(0.9468);transform-origin:0 0;">DALI</div>
<div class="t" style="left:135.00px;top:502.00px;font-size:13px;line-height:17px;color:#f2f2f2;transform:scaleX(0.9297);transform-origin:0 0;">DALI Slave [2D]</div>
<svg class="b" style="left:0;top:0" width="797" height="634"><g transform="translate(0 0)"><rect x="82.5" y="120" width="9.5" height="16.6" fill="#9c9cb8"/><path d="M81.5 122h1v1h-1zM81.5 125h1v1h-1zM81.5 128h1v1h-1zM81.5 131h1v1h-1zM81.5 134h1v1h-1zM100 118h1v1h-1zM100 121h1v1h-1zM100 124h1v1h-1zM100 127h1v1h-1z" fill="#9c9cb8"/><path d="M92 120V115.5H99.5V130.5H92M92 134.5H96.5V128.5M86.5 120V117.5H92M94.8 130.3L96.5 128.3L98.2 130.3" stroke="#9c9cb8" stroke-width="1" fill="none"/><path d="M86.5 119.5V123.5M84.5 121.5H88.5" stroke="#fff" stroke-width="1"/></g><path d="M110 142.4H124" stroke="#d01414" stroke-width="1.3" fill="none"/><path d="M128.6 142.4L120.6 139.0L123 142.4L120.6 145.8Z" fill="#d01414"/><path d="M115 157.5H128" stroke="#2c96ba" stroke-width="1.3" fill="none"/><path d="M110.6 157.5L118.6 154.1L116.2 157.5L118.6 160.9Z" fill="#2c96ba"/><path d="M110 166.4H124" stroke="#d01414" stroke-width="1.3" fill="none"/><path d="M128.6 166.4L120.6 163.0L123 166.4L120.6 169.8Z" fill="#d01414"/><path d="M115 181.5H128" stroke="#2c96ba" stroke-width="1.3" fill="none"/><path d="M110.6 181.5L118.6 178.1L116.2 181.5L118.6 184.9Z" fill="#2c96ba"/><path d="M110 190.4H124" stroke="#d01414" stroke-width="1.3" fill="none"/><path d="M128.6 190.4L120.6 187.0L123 190.4L120.6 193.8Z" fill="#d01414"/><path d="M115 205.5H128" stroke="#2c96ba" stroke-width="1.3" fill="none"/><path d="M110.6 205.5L118.6 202.1L116.2 205.5L118.6 208.9Z" fill="#2c96ba"/><path d="M110 218.3H113L120 212.8V231L113 226.3H110Z" fill="#cfcfd2"/><path d="M117 215.2L120 212.8V231L117 229Z" fill="#b0b0b6"/><path d="M122 219A3.4 3.4 0 0 1 122 225.4" stroke="#4a4a50" stroke-width="1.4" fill="none"/><path d="M122 214.6A7.7 7.7 0 0 1 122 230" stroke="#56565e" stroke-width="1.5" fill="none"/><g transform="translate(-1 -0.9)"><path d="M110 238.4H124" stroke="#d01414" stroke-width="1.3" fill="none"/><path d="M128.6 238.4L120.6 235.0L123 238.4L120.6 241.8Z" fill="#d01414"/></g><g transform="translate(-1 0)"><path d="M115 253.5H128" stroke="#2c96ba" stroke-width="1.3" fill="none"/><path d="M110.6 253.5L118.6 250.1L116.2 253.5L118.6 256.9Z" fill="#2c96ba"/></g><g transform="translate(-1 -0.9)"><path d="M110 262.4H124" stroke="#d01414" stroke-width="1.3" fill="none"/><path d="M128.6 262.4L120.6 259.0L123 262.4L120.6 265.79999999999995Z" fill="#d01414"/></g><g transform="translate(-1 0)"><path d="M115 277.5H128" stroke="#2c96ba" stroke-width="1.3" fill="none"/><path d="M110.6 277.5L118.6 274.1L116.2 277.5L118.6 280.9Z" fill="#2c96ba"/></g><path d="M110 310.4H124" stroke="#d01414" stroke-width="1.3" fill="none"/><path d="M128.6 310.4L120.6 307.0L123 310.4L120.6 313.79999999999995Z" fill="#d01414"/><path d="M115 325.5H128" stroke="#2c96ba" stroke-width="1.3" fill="none"/><path d="M110.6 325.5L118.6 322.1L116.2 325.5L118.6 328.9Z" fill="#2c96ba"/><path d="M116.6 341L122.4 341L119.5 344Z" fill="#fff"/><path d="M110 358.4H124" stroke="#d01414" stroke-width="1.3" fill="none"/><path d="M128.6 358.4L120.6 355.0L123 358.4L120.6 361.79999999999995Z" fill="#d01414"/><path d="M115 373.5H128" stroke="#2c96ba" stroke-width="1.3" fill="none"/><path d="M110.6 373.5L118.6 370.1L116.2 373.5L118.6 376.9Z" fill="#2c96ba"/><path d="M110 382.4H124" stroke="#d01414" stroke-width="1.3" fill="none"/><path d="M128.6 382.4L120.6 379.0L123 382.4L120.6 385.79999999999995Z" fill="#d01414"/><path d="M115 397.5H128" stroke="#2c96ba" stroke-width="1.3" fill="none"/><path d="M110.6 397.5L118.6 394.1L116.2 397.5L118.6 400.9Z" fill="#2c96ba"/><path d="M110 406.4H124" stroke="#d01414" stroke-width="1.3" fill="none"/><path d="M128.6 406.4L120.6 403.0L123 406.4L120.6 409.79999999999995Z" fill="#d01414"/><path d="M115 421.5H128" stroke="#2c96ba" stroke-width="1.3" fill="none"/><path d="M110.6 421.5L118.6 418.1L116.2 421.5L118.6 424.9Z" fill="#2c96ba"/><path d="M110 430.4H124" stroke="#d01414" stroke-width="1.3" fill="none"/><path d="M128.6 430.4L120.6 427.0L123 430.4L120.6 433.79999999999995Z" fill="#d01414"/><path d="M115 445.5H128" stroke="#2c96ba" stroke-width="1.3" fill="none"/><path d="M110.6 445.5L118.6 442.1L116.2 445.5L118.6 448.9Z" fill="#2c96ba"/><g transform="translate(0 336)"><rect x="82.5" y="120" width="9.5" height="16.6" fill="#9c9cb8"/><path d="M81.5 122h1v1h-1zM81.5 125h1v1h-1zM81.5 128h1v1h-1zM81.5 131h1v1h-1zM81.5 134h1v1h-1zM100 118h1v1h-1zM100 121h1v1h-1zM100 124h1v1h-1zM100 127h1v1h-1z" fill="#9c9cb8"/><path d="M92 120V115.5H99.5V130.5H92M92 134.5H96.5V128.5M86.5 120V117.5H92M94.8 130.3L96.5 128.3L98.2 130.3" stroke="#9c9cb8" stroke-width="1" fill="none"/><path d="M86.5 119.5V123.5M84.5 121.5H88.5" stroke="#fff" stroke-width="1"/></g><g transform="translate(0 0.9)"><path d="M110 478.4H124" stroke="#d01414" stroke-width="1.3" fill="none"/><path d="M128.6 478.4L120.6 475.0L123 478.4L120.6 481.79999999999995Z" fill="#d01414"/></g><path d="M115 493.5H128" stroke="#2c96ba" stroke-width="1.3" fill="none"/><path d="M110.6 493.5L118.6 490.1L116.2 493.5L118.6 496.9Z" fill="#2c96ba"/><g transform="translate(0 0.9)"><path d="M110 502.4H124" stroke="#d01414" stroke-width="1.3" fill="none"/><path d="M128.6 502.4L120.6 499.0L123 502.4L120.6 505.79999999999995Z" fill="#d01414"/></g><path d="M115 517.5H128" stroke="#2c96ba" stroke-width="1.3" fill="none"/><path d="M110.6 517.5L118.6 514.1L116.2 517.5L118.6 520.9Z" fill="#2c96ba"/><path d="M110 527.4H124" stroke="#d01414" stroke-width="1.3" fill="none"/><path d="M128.6 527.4L120.6 524L123 527.4L122.6 528H128Z" fill="#d01414"/></svg>
<div class="b" style="left:299px;top:113px;width:18px;height:415px;background:#403940;box-sizing:border-box;border-top:1px solid #4a444b;border-right:1px solid #4a444b;border-bottom:1px solid #4a444b;"></div>
<div class="b" style="left:303px;top:131px;width:9px;height:85px;background:#474548;"></div>
<svg class="b" style="left:299px;top:113px" width="18" height="415"><path d="M4 12L8.7 7.3L13.4 12Z" fill="#a8a6a8"/><path d="M4 403L8.7 407.7L13.4 403Z" fill="#a8a6a8"/></svg>
<div class="b" style="left:75px;top:529px;width:242px;height:10px;background:#2f2930;"></div>
<div class="b" style="left:221px;top:366px;width:443px;height:20px;background:#fff;box-sizing:border-box;border:1px solid #767676;box-shadow:2px 2px 2px rgba(0,0,0,0.45)"></div>
<div class="t" style="left:226.30px;top:367.60px;font-size:12px;line-height:16px;color:#575757;transform:scaleX(1.0029);transform-origin:0 0;">Low level routines for controlling or interacting with a standard one wire interface.</div>
</div></body></html>
